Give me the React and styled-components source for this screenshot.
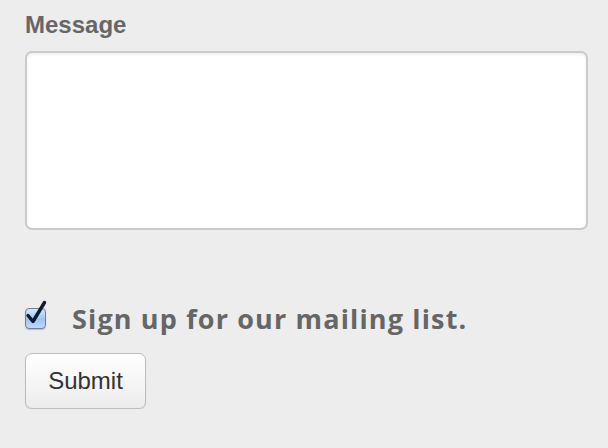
import React, { useState } from 'react';
import styled, { createGlobalStyle } from 'styled-components';

const GlobalStyle = createGlobalStyle`
  html, body {
    margin: 0;
    background: #ededed;
  }
`;

export default function App() {
  const [message, setMessage] = useState('');
  const [subscribe, setSubscribe] = useState(true);

  return (
    <>
      <GlobalStyle />
      <Form onSubmit={(e) => e.preventDefault()}>
        <Label htmlFor='message'>Message</Label>
        <TextArea
          id='message'
          value={message}
          onChange={(e) => setMessage(e.target.value)}
        />
        <CheckRow>
          <CheckBox
            type='button'
            checked={subscribe}
            onClick={() => setSubscribe(!subscribe)}
          >
            {subscribe && (
              <svg width='26' height='28' viewBox='0 0 26 28'>
                <path
                  d='M4 15.5 L9 21.5 L20.5 2.5'
                  fill='none'
                  stroke='#0d1a33'
                  strokeWidth='3.4'
                  strokeLinecap='round'
                  strokeLinejoin='round'
                />
              </svg>
            )}
          </CheckBox>
          <CheckLabel>Sign up for our mailing list.</CheckLabel>
        </CheckRow>
        <SubmitButton type='submit'>Submit</SubmitButton>
      </Form>
    </>
  );
}

const Form = styled.form`
  display: flex;
  flex-direction: column;
  align-items: flex-start;
  padding: 10px 21px 0 25px;
`;

const Label = styled.label`
  font-family: 'Liberation Sans', Arial, sans-serif;
  font-weight: bold;
  font-size: 24px;
  color: #666;
  line-height: 30px;
  margin-bottom: 11px;
`;

const TextArea = styled.textarea`
  box-sizing: border-box;
  width: 563px;
  height: 179px;
  border: 2px solid #cbcbcb;
  border-radius: 7px;
  background: #fff;
  box-shadow: inset 0 2px 3px rgba(0, 0, 0, 0.06);
  resize: none;
  outline: none;
  font-size: 18px;
`;

const CheckRow = styled.div`
  display: flex;
  align-items: center;
  gap: 26px;
  margin-top: 66px;
  height: 40px;
`;

const CheckBox = styled.button`
  position: relative;
  box-sizing: border-box;
  width: 21px;
  height: 21px;
  margin-top: 4px;
  padding: 0;
  border: 1px solid #6d7f9a;
  border-radius: 4px;
  background: linear-gradient(#d6e6fa, #9ec5f2 55%, #bcd9fb);
  box-shadow: 0 1px 1px rgba(0, 0, 0, 0.2);

  svg {
    position: absolute;
    left: -2px;
    top: -9px;
  }
`;

const CheckLabel = styled.span`
  font-family: 'Open Sans', 'DejaVu Sans', sans-serif;
  font-weight: bold;
  font-size: 27px;
  color: #666;
  letter-spacing: 1.15px;
  margin-top: 4px;
`;

const SubmitButton = styled.button`
  margin-top: 17px;
  width: 121px;
  height: 56px;
  border: 1px solid #bdbdbd;
  border-radius: 7px;
  background: linear-gradient(#ffffff, #f6f6f6 50%, #ebebeb);
  box-shadow: 0 1px 1px rgba(0, 0, 0, 0.12);
  font-family: 'Liberation Sans', Arial, sans-serif;
  font-size: 24px;
  color: #333;
`;
